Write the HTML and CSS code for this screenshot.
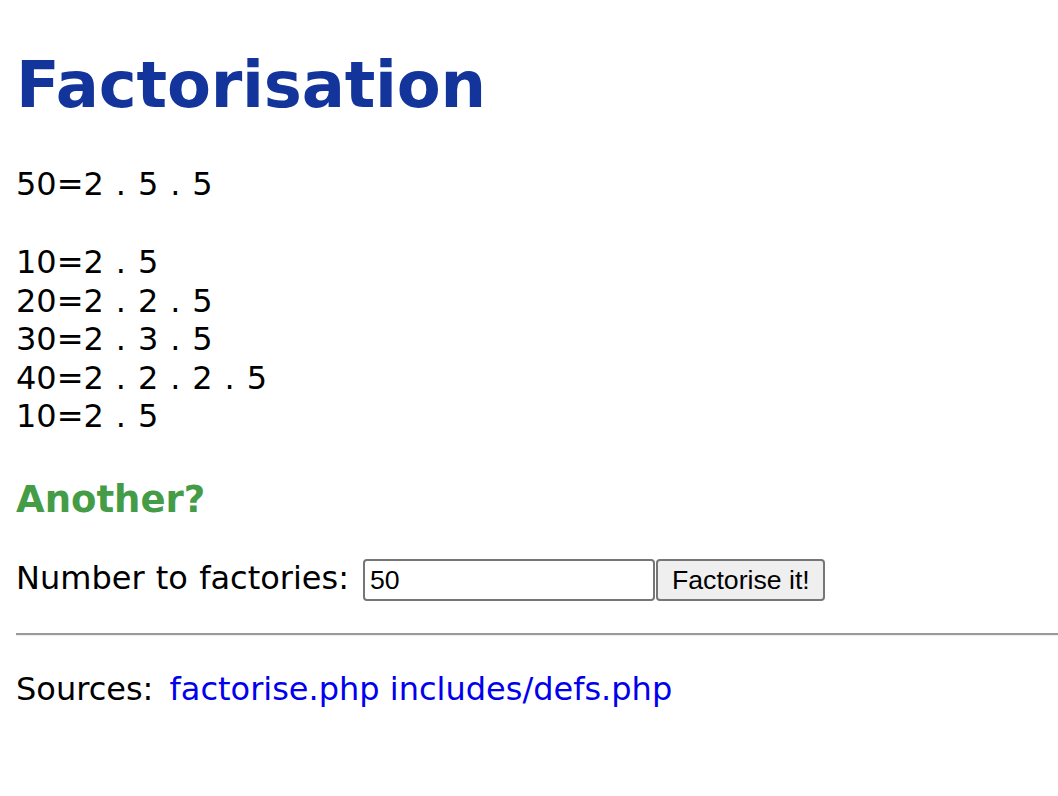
FILE: index.html
```html
<!DOCTYPE html>
<html>
<head>
<meta charset="utf-8">
<title>Factorisation</title>
<link rel="stylesheet" href="styles.css">
</head>
<body>
<h1 class="title">Factorisation</h1>
<p class="result">50=2 . 5 . 5</p>
<p class="list">10=2 . 5<br>20=2 . 2 . 5<br>30=2 . 3 . 5<br>40=2 . 2 . 2 . 5<br>10=2 . 5</p>
<h3 class="another">Another?</h3>
<form class="form">
  <label class="label" for="n">Number to factories:</label>
  <input class="num" id="n" type="text" value="50">
  <button class="btn" type="button">Factorise it!</button>
</form>
<hr class="rule">
<p class="sources"><span class="sources-label">Sources:</span> <a class="link" href="#">factorise.php</a> <a class="link" href="#">includes/defs.php</a></p>
</body>
</html>
```

FILE: styles.css
```css
html, body {
  margin: 0;
  padding: 0;
  background: #fff;
}
body {
  padding-left: 16px;
  font-family: "DejaVu Sans", Verdana, sans-serif;
  font-size: 32px;
  line-height: 38.4px;
  color: #000;
  word-spacing: 1.1px;
}
.title {
  margin: 48px 0 0;
  font-size: 64px;
  line-height: 74px;
  font-weight: bold;
  letter-spacing: -0.2px;
  color: #13349a;
}
.result {
  margin: 43px 0 0;
  word-spacing: 1.75px;
}
.list {
  margin: 40px 0 0;
  word-spacing: 1.75px;
}
.another {
  margin: 43px 0 0;
  font-size: 37px;
  line-height: 43px;
  font-weight: bold;
  color: #449c47;
}
.form {
  margin: 38px 0 0;
  display: flex;
  align-items: flex-start;
}
.label {
  margin-right: 14px;
}
.num {
  box-sizing: border-box;
  width: 292px;
  height: 42px;
  margin: 0;
  padding: 0 5px;
  border: 2px solid #767676;
  border-radius: 4px;
  font-family: "Liberation Sans", Arial, sans-serif;
  font-size: 26.67px;
  word-spacing: 0;
  color: #000;
  background: #fff;
}
.btn {
  box-sizing: border-box;
  height: 42px;
  margin: 0 0 0 1px;
  padding: 0 13px 0 14px;
  border: 2px solid #767676;
  border-radius: 4px;
  background: #efefef;
  font-family: "Liberation Sans", Arial, sans-serif;
  font-size: 26.67px;
  word-spacing: 0;
  color: #000;
}
.rule {
  margin: 32px 0 0;
  height: 0;
  border: 0;
  border-top: 2px solid #9a9a9a;
  border-bottom: 1px solid #eeeeee;
}
.sources {
  margin: 34px 0 0;
  word-spacing: 0;
}
.sources-label {
  margin-right: 6px;
}
.link {
  color: #0000ee;
  text-decoration: none;
}
```
